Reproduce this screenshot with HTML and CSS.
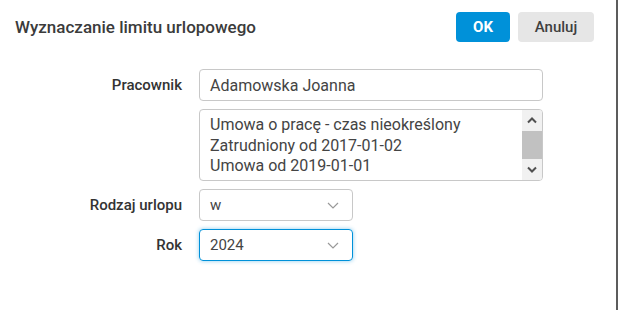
FILE: index.html
```html
<!DOCTYPE html>
<html lang="pl">
<head>
  <meta charset="UTF-8" />
  <title>Wyznaczanie limitu urlopowego</title>
  <link rel="stylesheet" href="styles.css">
</head>
<body>
  <div class="dialog">
    <div class="header">
      <h1 class="title">Wyznaczanie limitu urlopowego</h1>
      <div class="actions">
        <button class="btn btn-ok">OK</button>
        <button class="btn btn-cancel">Anuluj</button>
      </div>
    </div>

    <div class="form">
      <div class="row">
        <label class="label">Pracownik</label>
        <div class="input wide">Adamowska Joanna</div>
      </div>

      <div class="row">
        <span class="label"></span>
        <div class="listbox wide">
          <div class="list-text">
            <div>Umowa o pracę - czas nieokreślony</div>
            <div>Zatrudniony od 2017-01-02</div>
            <div>Umowa od 2019-01-01</div>
          </div>
          <div class="scrollbar">
            <svg class="arrow" width="10" height="7" viewBox="0 0 10 7"><path d="M1 5.5 L5 1.5 L9 5.5" fill="none" stroke="#505050" stroke-width="2"/></svg>
            <div class="thumb"></div>
            <svg class="arrow" width="10" height="7" viewBox="0 0 10 7"><path d="M1 1.5 L5 5.5 L9 1.5" fill="none" stroke="#505050" stroke-width="2"/></svg>
          </div>
        </div>
      </div>

      <div class="row">
        <label class="label">Rodzaj urlopu</label>
        <div class="input select">
          <span>w</span>
          <svg width="12" height="7" viewBox="0 0 12 7"><path d="M1 1 L6 6 L11 1" fill="none" stroke="#999" stroke-width="1.2"/></svg>
        </div>
      </div>

      <div class="row">
        <label class="label">Rok</label>
        <div class="input select focused">
          <span>2024</span>
          <svg width="12" height="7" viewBox="0 0 12 7"><path d="M1 1 L6 6 L11 1" fill="none" stroke="#999" stroke-width="1.2"/></svg>
        </div>
      </div>
    </div>
  </div>
</body>
</html>
```

FILE: styles.css
```css
* {
  margin: 0;
  padding: 0;
  box-sizing: border-box;
}

body, html {
  height: 100%;
  background: #fff;
  font-family: Roboto, "Liberation Sans", sans-serif;
  overflow: hidden;
}

.dialog {
  width: 618px;
  height: 310px;
  border-right: 2px solid #5c5c5c;
  background: #fff;
}

.header {
  display: flex;
  justify-content: space-between;
  align-items: center;
  padding: 12px 22px 0 15px;
}

.title {
  font-size: 17px;
  font-weight: 500;
  color: #3b3b3b;
}

.actions {
  display: flex;
  gap: 8px;
}

.btn {
  height: 30px;
  border: none;
  border-radius: 4px;
  font-family: Roboto, "Liberation Sans", sans-serif;
  font-size: 15px;
  cursor: pointer;
}

.btn-ok {
  width: 54px;
  background: #0091d9;
  color: #fff;
  font-weight: 700;
}

.btn-cancel {
  width: 76px;
  background: #e6e6e6;
  color: #3f3f3f;
  font-weight: 500;
}

.form {
  display: flex;
  flex-direction: column;
  gap: 8px;
  padding: 27px 0 0 15px;
}

.row {
  display: flex;
  align-items: center;
  gap: 17px;
}

.label {
  width: 167px;
  text-align: right;
  font-size: 15px;
  font-weight: 500;
  color: #333;
}

.input {
  height: 32px;
  border: 1px solid #c8c8c8;
  border-radius: 4px;
  padding: 0 10px;
  display: flex;
  align-items: center;
  font-size: 16px;
  color: #444;
}

.wide {
  width: 344px;
}

.listbox {
  height: 72px;
  border: 1px solid #c8c8c8;
  border-radius: 4px;
  display: flex;
  overflow: hidden;
}

.list-text {
  flex: 1;
  padding: 5px 10px;
  font-size: 16px;
  line-height: 20.5px;
  color: #444;
}

.scrollbar {
  width: 20px;
  background: #f1f1f1;
  display: flex;
  flex-direction: column;
  align-items: center;
}

.arrow {
  margin: 7px 0;
}

.thumb {
  flex: 1;
  width: 100%;
  background: #c1c1c1;
}

.select {
  width: 154px;
  justify-content: space-between;
  padding-right: 13px;
  font-size: 15px;
}

.focused {
  border-color: #0091d9;
  box-shadow: 0 0 4px rgba(0, 145, 217, 0.45);
}
```
